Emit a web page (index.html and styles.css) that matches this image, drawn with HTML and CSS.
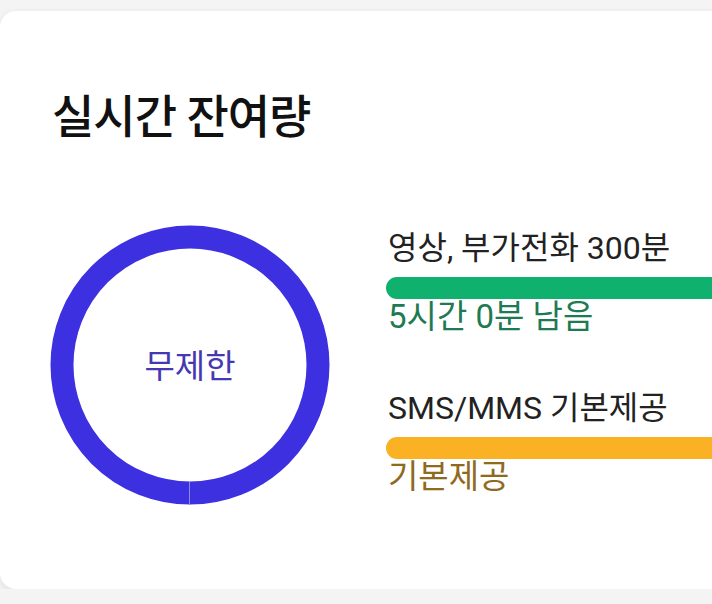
FILE: index.html
```html
<!DOCTYPE html>
<html lang="ko">
<head>
  <meta charset="UTF-8">
  <title>실시간 잔여량</title>
  <link rel="stylesheet" href="styles.css">
</head>
<body>
  <div class="card">
    <h1 class="title">실시간 잔여량</h1>
    <div class="usage">
      <div class="ring">
        <svg width="280" height="280" viewBox="0 0 280 280">
          <circle cx="140" cy="140" r="128" fill="none" stroke="#3d30e0" stroke-width="23"/>
          <line x1="139.5" y1="257" x2="139.5" y2="280" stroke="#8f88ee" stroke-width="1"/>
        </svg>
        <span class="ring-label">무제한</span>
      </div>
      <div class="items">
        <div class="item">
          <div class="item-name">영상, 부가전화 300분</div>
          <div class="bar green"></div>
          <div class="item-left green-text">5시간 0분 남음</div>
        </div>
        <div class="item">
          <div class="item-name">SMS/MMS 기본제공</div>
          <div class="bar orange"></div>
          <div class="item-left gold-text">기본제공</div>
        </div>
      </div>
    </div>
  </div>
</body>
</html>
```
FILE: styles.css
```css
body{
  margin: 0;
  background: #f4f4f4;
  font-family: Roboto, "Noto Sans CJK KR", sans-serif;
  overflow: hidden;
}
.card{
  margin-top: 11px;
  width: 740px;
  height: 578px;
  background: #fff;
  border-radius: 16px 0 0 16px;
  box-shadow: 0 3px 9px rgba(0, 0, 0, 0.09);
  box-sizing: border-box;
  padding: 76px 0 0 50px;
}
.title{
  margin: 0 0 0 2px;
  font-size: 46px;
  line-height: 60px;
  font-weight: 500;
  color: #111;
  letter-spacing: -1px;
}
.usage{
  display: flex;
  margin-top: 78px;
}
.ring{
  position: relative;
  width: 280px;
  height: 280px;
}
.ring svg{
  display: block;
}
.ring-label{
  position: absolute;
  top: 50%;
  left: 50%;
  transform: translate(-50%, -52%);
  font-size: 33px;
  color: #4538b0;
  white-space: nowrap;
}
.items{
  flex: 1;
  margin-left: 56px;
  padding-top: 3px;
}
.item{
  margin-bottom: 51px;
}
.item-name{
  margin-left: 2px;
  font-size: 32px;
  line-height: 40px;
  color: #222;
}
.bar{
  height: 22px;
  border-radius: 11px 0 0 11px;
  margin-top: 9px;
}
.green{
  background: #10b16f;
}
.orange{
  background: #fbb124;
}
.item-left{
  margin: -2px 0 0 2px;
  font-size: 33px;
  line-height: 40px;
}
.green-text{
  color: #1e7a52;
}
.gold-text{
  color: #8f6a1e;
}
```
